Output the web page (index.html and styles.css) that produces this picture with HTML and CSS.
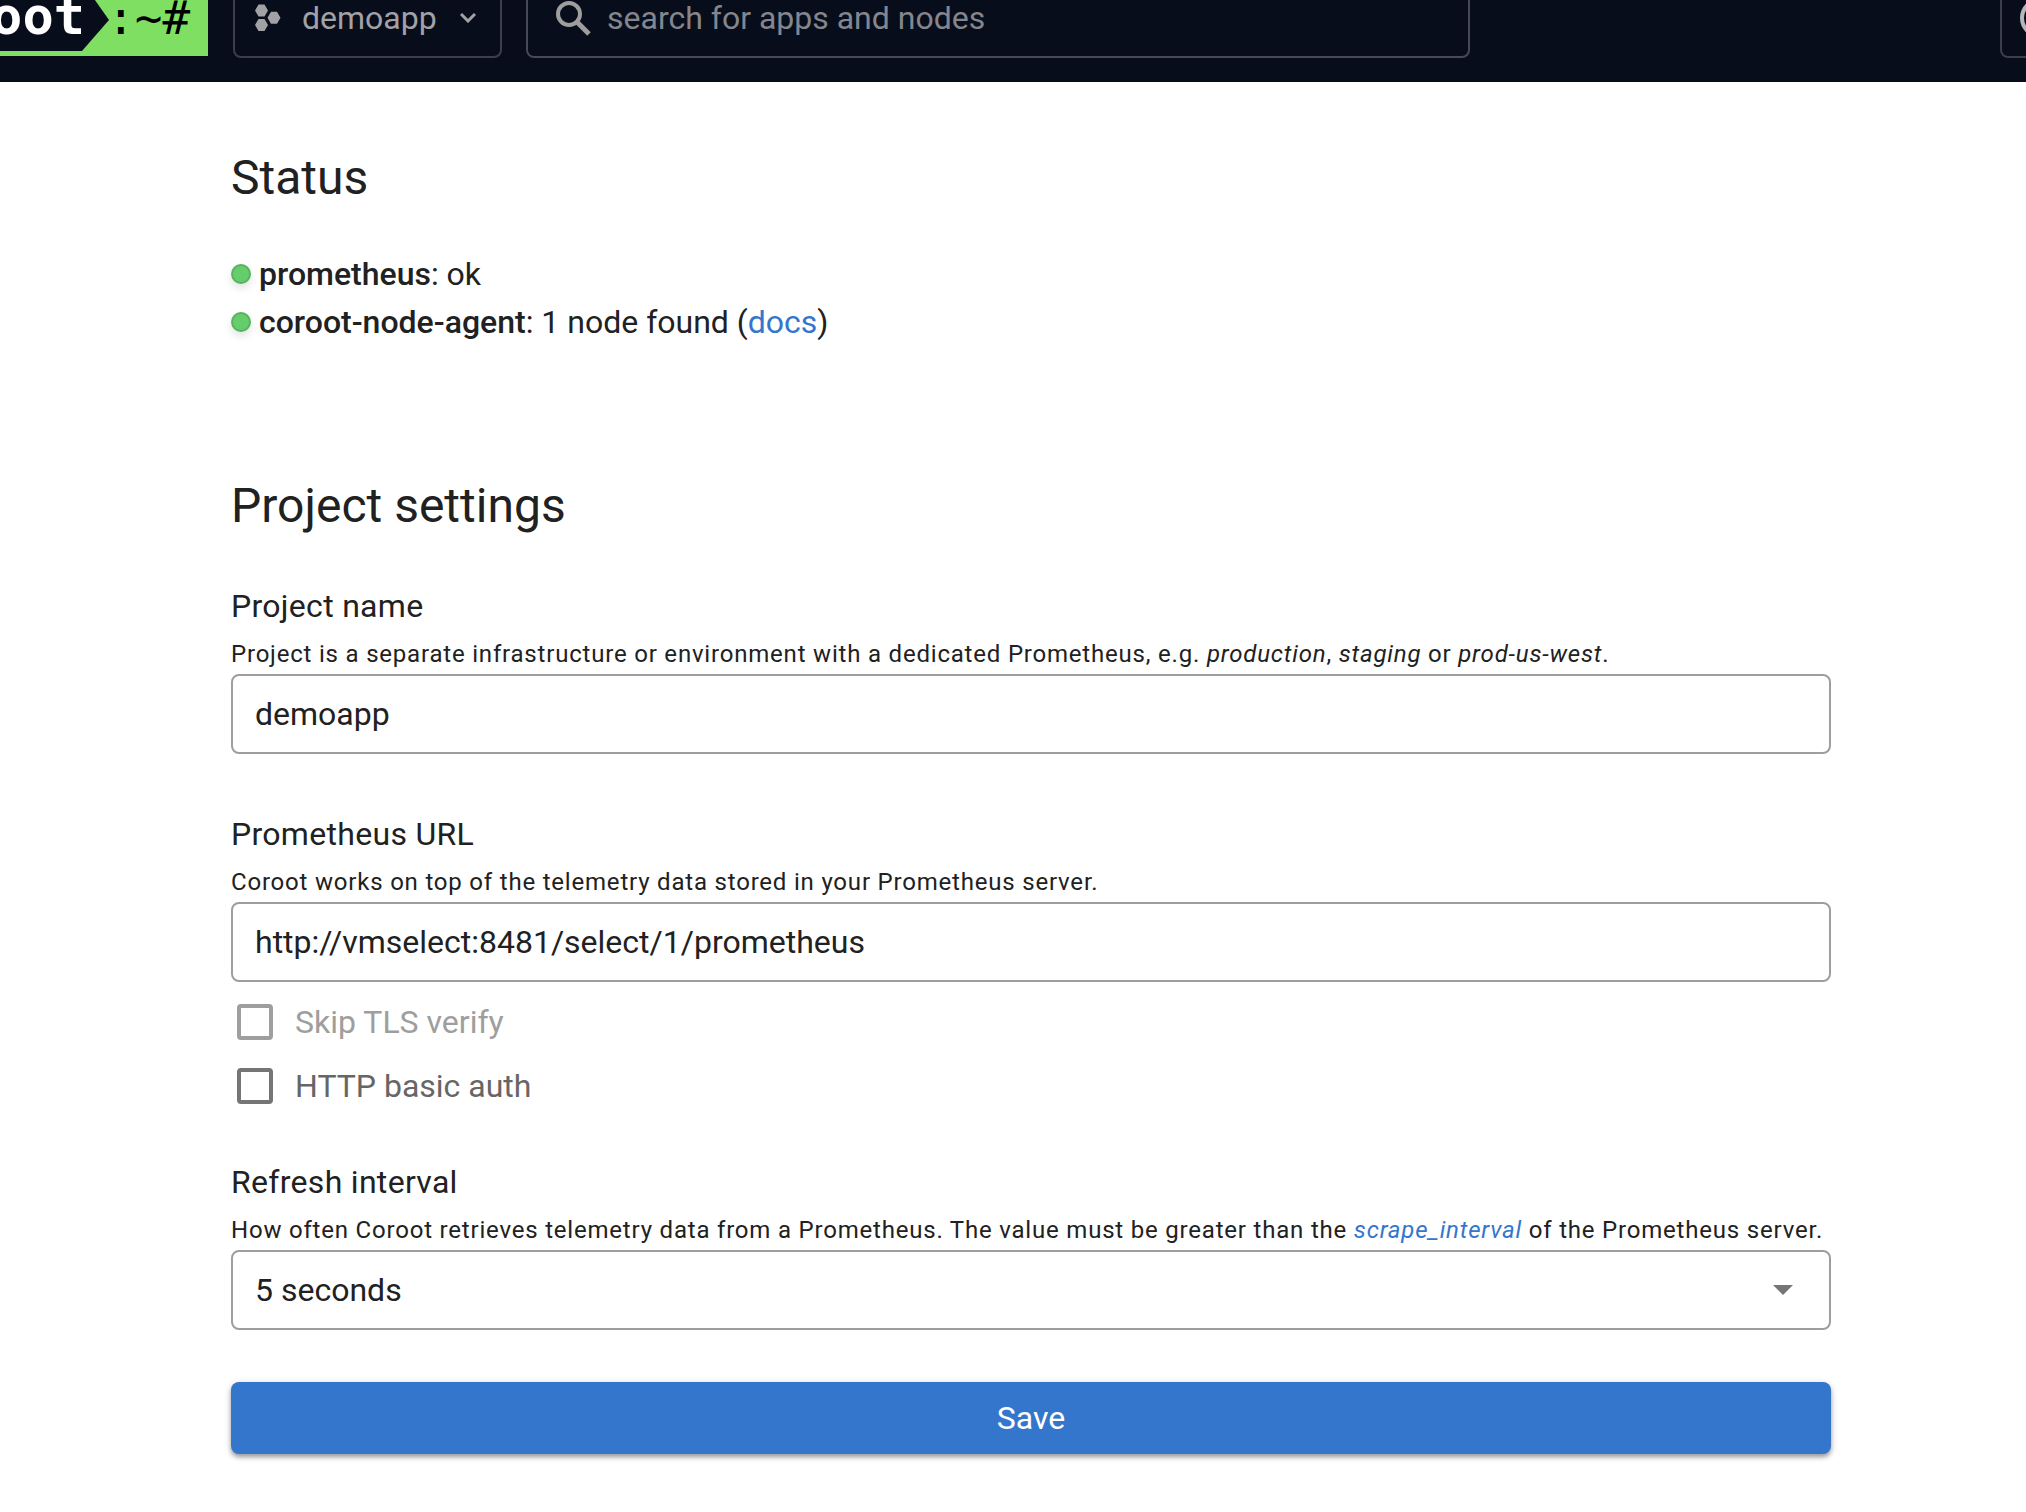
FILE: index.html
```html
<!DOCTYPE html>
<html lang="en">
<head>
<meta charset="utf-8">
<title>Coroot</title>
<meta name="viewport" content="width=device-width, initial-scale=1">
<link rel="stylesheet" href="styles.css">
</head>
<body>
<header class="topbar">
  <a class="logo" href="#" aria-label="Coroot home">
    <span class="logo-name">oot</span>
    <span class="logo-prompt">:~#</span>
  </a>
  <button class="project" type="button">
    <svg width="26" height="28" viewBox="0 0 26 28" fill="currentColor" aria-hidden="true"><path d="M3.500 0.500h6l3.500 6-3.500 6h-6l-3.500-6zM3.500 15h6l3.500 6-3.500 6h-6l-3.500-6zM16 7.800h6l3.500 6-3.500 6h-6l-3.500-6z"/></svg>
    <span class="project-name">demoapp</span>
    <svg width="16" height="10" viewBox="0 0 16 10" fill="none" stroke="currentColor" stroke-width="3" aria-hidden="true"><path d="M1 1l7 7 7-7"/></svg>
  </button>
  <label class="search">
    <svg width="35" height="35" viewBox="0 0 35 35" fill="none" stroke="#9f9d9d" stroke-width="4" aria-hidden="true"><circle cx="13" cy="13" r="11"/><path d="M21 21l12 12" stroke-width="5"/></svg>
    <input class="search-input" type="text" placeholder="search for apps and nodes" aria-label="Search">
  </label>
  <button class="more" type="button" aria-label="More"><span class="more-icon"></span></button>
</header>
<main class="content">
  <section class="status">
    <h1 class="title">Status</h1>
    <p class="status-row"><span class="led"></span><span><strong>prometheus</strong>: ok</span></p>
    <p class="status-row"><span class="led"></span><span><strong>coroot-node-agent</strong>: 1 node found (<a href="#">docs</a>)</span></p>
  </section>
  <form class="settings">
    <h1 class="title">Project settings</h1>
    <div class="field">
      <label class="label" for="name">Project name</label>
      <p class="hint">Project is a separate infrastructure or environment with a dedicated Prometheus, e.g. <em>production</em>, <em>staging</em> or <em>prod-us-west</em>.</p>
      <input class="control" id="name" type="text" value="demoapp">
    </div>
    <div class="field">
      <label class="label" for="url">Prometheus URL</label>
      <p class="hint">Coroot works on top of the telemetry data stored in your Prometheus server.</p>
      <input class="control" id="url" type="text" value="http://vmselect:8481/select/1/prometheus">
    </div>
    <div class="checks">
      <label class="check check-disabled"><input type="checkbox" disabled>Skip TLS verify</label>
      <label class="check"><input type="checkbox">HTTP basic auth</label>
    </div>
    <div class="field">
      <label class="label" for="interval">Refresh interval</label>
      <p class="hint">How often Coroot retrieves telemetry data from a Prometheus. The value must be greater than the <a href="#"><em>scrape_interval</em></a> of the Prometheus server.</p>
      <div class="select">
        <select class="control" id="interval"><option>5 seconds</option><option>10 seconds</option></select>
        <svg class="caret" width="20" height="10" viewBox="0 0 20 10" aria-hidden="true"><path d="M0 0h20L10 10z" fill="#757575"/></svg>
      </div>
    </div>
    <button class="save" type="submit">Save</button>
  </form>
</main>
</body>
</html>
```
FILE: styles.css
```css
* { box-sizing: border-box; }
body {
  margin: 0;
  background: #fff;
  color: #212121;
  font: 32px/48px Roboto, sans-serif;
}
h1, p { margin: 0; }
a { color: #3476cb; text-decoration: none; }
strong { font-weight: 500; }
button, input, select { font: inherit; color: inherit; margin: 0; }

.topbar {
  display: flex;
  align-items: flex-end;
  height: 82px;
  overflow: hidden;
  background: #080d1b;
  padding-bottom: 24px;
}
.logo {
  display: flex;
  align-items: flex-end;
  width: 208px;
  height: 80px;
  margin: 0 25px 2px 0;
  flex: none;
  overflow: hidden;
  background: #7edf63;
  font-family: "DejaVu Sans Mono", monospace;
}
.logo-name {
  display: flex;
  justify-content: flex-end;
  flex: none;
  width: 109px;
  height: 75px;
  margin: 0 -2px 5px 0;
  padding-right: 24px;
  background: #080d1b;
  clip-path: polygon(0 0, 78px 0, 109px 44px, 82px 100%, 0 100%);
  color: #fff;
  font-size: 52px;
  font-weight: 700;
  line-height: 80px;
}
.logo-prompt { color: #000; font-size: 46px; line-height: 76px; }
.project {
  display: flex;
  align-items: center;
  gap: 21px;
  width: 269px;
  height: 80px;
  flex: none;
  padding: 0 24px 0 20px;
  border: 2px solid #3c3e49;
  border-radius: 8px;
  background: none;
  color: #a1a1a6;
}
.project-name { flex: 1; text-align: left; }
.search {
  display: flex;
  align-items: center;
  gap: 16px;
  width: 944px;
  height: 80px;
  margin-left: 24px;
  padding: 0 28px;
  border: 2px solid #474954;
  border-radius: 8px;
}
.search-input {
  flex: 1;
  min-width: 0;
  padding: 0;
  border: 0;
  outline: 0;
  background: none;
  color: #fff;
}
.search-input::placeholder { color: #84868d; opacity: 1; }
.more {
  width: 80px;
  height: 80px;
  flex: none;
  margin: 0 -54px 0 auto;
  padding: 0 18px;
  border: 2px solid #3c3e49;
  border-radius: 8px;
  background: none;
}
.more-icon {
  display: block;
  width: 40px;
  height: 40px;
  border: 4px solid #b5b6ba;
  border-radius: 50%;
}

.content { padding: 64px 195px 56px 231px; }
.title { font-size: 48px; font-weight: 400; line-height: 64px; margin-bottom: 40px; }
.status { margin-bottom: 128px; }
.status-row { display: flex; align-items: center; gap: 8px; }
.led {
  width: 20px;
  height: 20px;
  border: 2px solid #57b35d;
  border-radius: 50%;
  background: #66cd6c;
  box-shadow: 0 4px 8px rgba(0, 0, 0, .12);
}
.field + .field { margin-top: 52px; }
.label { display: block; line-height: 56px; letter-spacing: .009375em; }
.hint { font-size: 24px; line-height: 40px; letter-spacing: .0333em; }
.control {
  display: block;
  width: 100%;
  height: 80px;
  padding: 0 22px;
  border: 2px solid #9e9e9e;
  border-radius: 8px;
  background: #fff;
  appearance: none;
}
.checks {
  display: flex;
  flex-direction: column;
  gap: 16px;
  margin: 16px 0 44px;
}
.check { display: flex; align-items: center; gap: 22px; padding-left: 6px; color: #666; }
.check input {
  appearance: none;
  width: 36px;
  height: 36px;
  border: 4px solid #757575;
  border-radius: 4px;
}
.check-disabled { color: #9e9e9e; }
.check-disabled input { border-color: #9e9e9e; }
.select { display: grid; align-items: center; }
.select > * { grid-area: 1 / 1; }
.caret { justify-self: end; margin-right: 38px; pointer-events: none; }
.save {
  display: block;
  width: 100%;
  height: 72px;
  margin-top: 52px;
  border: 0;
  border-radius: 8px;
  background: #3476cb;
  color: #fff;
  box-shadow: 0 3px 4px rgba(0, 0, 0, .32), 0 2px 8px rgba(0, 0, 0, .14);
}
```
